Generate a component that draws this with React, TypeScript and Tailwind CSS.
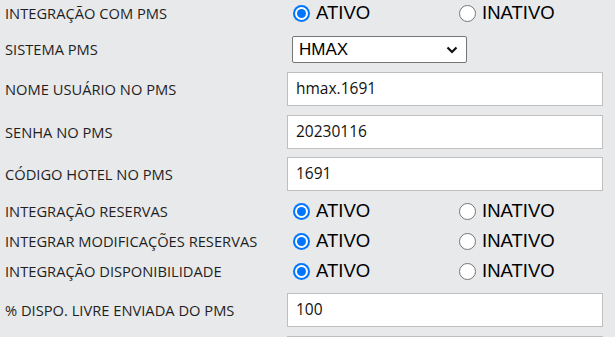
import type { ReactNode } from "react";

const label = "font-['Open_Sans',sans-serif] text-[14.7px] text-[#1f1f1f]";

function Row({
  title,
  className,
  children,
}: {
  title: string;
  className?: string;
  children: ReactNode;
}) {
  return (
    <div className={`flex items-center ${className ?? ""}`}>
      <div className={`w-[287px] shrink-0 pl-[5px] ${label}`}>{title}</div>
      <div className="flex-1 pr-[12px]">{children}</div>
    </div>
  );
}

function Radio({ checked, text }: { checked?: boolean; text: string }) {
  return (
    <label className="flex items-center gap-[6px]">
      {checked ? (
        <span className="flex h-[17px] w-[17px] items-center justify-center rounded-full bg-[#0075ff]">
          <span className="flex h-[13px] w-[13px] items-center justify-center rounded-full bg-white">
            <span className="h-[9px] w-[9px] rounded-full bg-[#0075ff]" />
          </span>
        </span>
      ) : (
        <span className="h-[17px] w-[17px] rounded-full border border-[#767676] bg-white" />
      )}
      <span className="font-['Liberation_Sans',Arial,sans-serif] text-[18.5px] leading-none text-black">
        {text}
      </span>
    </label>
  );
}

function Status() {
  return (
    <div className="flex">
      <div className="w-[172px] pl-[6px]">
        <Radio checked text="ATIVO" />
      </div>
      <Radio text="INATIVO" />
    </div>
  );
}

function Field({ value }: { value: string }) {
  return (
    <div className="flex h-[34px] items-center border border-[#bfbfbf] bg-white pl-[8px] font-['Open_Sans',sans-serif] text-[15.5px] text-[#111]">
      {value}
    </div>
  );
}

export default function App() {
  return (
    <div className="h-[337px] w-[615px] overflow-hidden bg-[#e8e9eb]">
      <Row title="INTEGRAÇÃO COM PMS" className="h-[27px]">
        <Status />
      </Row>
      <Row title="SISTEMA PMS" className="mt-[9px]">
        <div className="ml-[5px] flex h-[27px] w-[175px] items-center justify-between rounded-[2px] border border-[#767676] bg-white pl-[6px] pr-[8px]">
          <span className="font-['Liberation_Sans',Arial,sans-serif] text-[17px] text-black">HMAX</span>
          <svg width="12" height="8" viewBox="0 0 12 8" fill="none">
            <path d="M1.5 1.5L6 6L10.5 1.5" stroke="#111" strokeWidth="2.2" />
          </svg>
        </div>
      </Row>
      <Row title="NOME USUÁRIO NO PMS" className="mt-[9px]">
        <Field value="hmax.1691" />
      </Row>
      <Row title="SENHA NO PMS" className="mt-[9px]">
        <Field value="20230116" />
      </Row>
      <Row title="CÓDIGO HOTEL NO PMS" className="mt-[8px]">
        <Field value="1691" />
      </Row>
      <Row title="INTEGRAÇÃO RESERVAS" className="mt-[5px] h-[30px]">
        <Status />
      </Row>
      <Row title="INTEGRAR MODIFICAÇÕES RESERVAS" className="h-[30px]">
        <Status />
      </Row>
      <Row title="INTEGRAÇÃO DISPONIBILIDADE" className="h-[30px]">
        <Status />
      </Row>
      <Row title="% DISPO. LIVRE ENVIADA DO PMS" className="mt-[7px]">
        <Field value="100" />
      </Row>
      <Row title="" className="mt-[9px]">
        <Field value="" />
      </Row>
    </div>
  );
}
